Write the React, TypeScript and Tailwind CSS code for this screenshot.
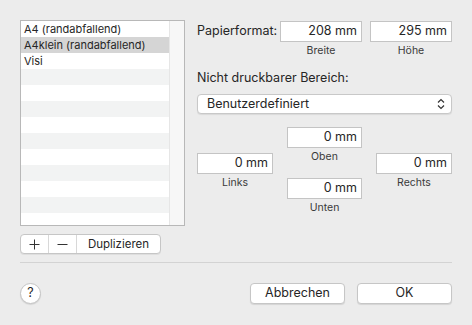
const font = { fontFamily: 'Inter, "Liberation Sans", sans-serif' };

const Field = ({ value, label, width = "w-[76px]" }: { value: string; label?: string; width?: string }) => (
  <div className={`flex flex-col items-center ${width}`}>
    <div className="w-full h-[21px] bg-white border border-[#c4c4c4] flex items-center justify-end pr-[4px] text-[12.5px] text-[#262626]">
      {value}
    </div>
    {label && <div className="mt-[2px] leading-[14px] text-[10.5px] text-[#3a3a3a]">{label}</div>}
  </div>
);

const rows = ["A4 (randabfallend)", "A4klein (randabfallend)", "Visi", "", "", "", "", "", "", "", "", "", ""];

export default function App() {
  return (
    <div style={font} className="w-[472px] h-[325px] bg-[#ececec] px-[20px] pt-[20px] flex flex-col text-[#262626]">
      <div className="flex">
        <div className="flex flex-col w-[165px]">
          <div className="h-[206px] border border-[#b8b8b8] bg-white flex overflow-hidden">
            <div className="flex-1 flex flex-col">
              {rows.map((r, i) => (
                <div
                  key={i}
                  className={`h-[16px] shrink-0 pl-[3px] leading-[16px] text-[11px] ${
                    i === 1 ? "bg-[#d5d5d5]" : i >= 3 && i % 2 === 1 ? "bg-[#f2f3f3]" : "bg-white"
                  }`}
                >
                  {r}
                </div>
              ))}
            </div>
            <div className="w-[15px] bg-[#f7f7f7] border-l border-[#e6e6e6]" />
          </div>
          <div className="mt-[8px] w-[141px] h-[20px] flex bg-white border border-[#c6c6c6] rounded-[4px] shadow-[0_1px_0_rgba(0,0,0,0.06)]">
            <div className="w-[28px] flex items-center justify-center border-r border-[#d8d8d8]">
              <svg width="11" height="11" viewBox="0 0 11 11">
                <path d="M5.5 0.5v10M0.5 5.5h10" stroke="#333" strokeWidth="1" />
              </svg>
            </div>
            <div className="w-[28px] flex items-center justify-center border-r border-[#d8d8d8]">
              <svg width="11" height="11" viewBox="0 0 11 11">
                <path d="M0.5 5.5h10" stroke="#333" strokeWidth="1" />
              </svg>
            </div>
            <div className="flex-1 flex items-center justify-center text-[11.5px] pt-[1px]">Duplizieren</div>
          </div>
        </div>

        <div className="ml-[12px] w-[255px] flex flex-col">
          <div className="flex items-start mt-[1px]">
            <div className="w-[83px] h-[21px] flex items-center text-[12.5px]">Papierformat:</div>
            <Field value="208 mm" label="Breite" width="w-[82px]" />
            <div className="ml-[8px]">
              <Field value="295 mm" label="Höhe" width="w-[82px]" />
            </div>
          </div>
          <div className="mt-[12px] text-[12.5px] leading-[16px]">Nicht druckbarer Bereich:</div>
          <div className="mt-[8px] h-[20px] bg-white border border-[#c8c8c8] rounded-[4px] shadow-[0_1px_1px_rgba(0,0,0,0.08)] flex items-center justify-between pl-[9px] pr-[6px]">
            <span className="text-[12.5px]">Benutzerdefiniert</span>
            <svg width="8" height="12" viewBox="0 0 8 12">
              <path d="M1 4.5L4 1.5L7 4.5M1 7.5L4 10.5L7 7.5" fill="none" stroke="#333" strokeWidth="1.2" />
            </svg>
          </div>
          <div className="mt-[13px] flex gap-[14px]">
            <div className="mt-[26px]">
              <Field value="0 mm" label="Links" />
            </div>
            <div className="flex flex-col">
              <Field value="0 mm" label="Oben" width="w-[75px]" />
              <div className="mt-[14px]">
                <Field value="0 mm" label="Unten" width="w-[75px]" />
              </div>
            </div>
            <div className="mt-[26px]">
              <Field value="0 mm" label="Rechts" />
            </div>
          </div>
        </div>
      </div>

      <div className="mt-[8px] h-px bg-[#d3d3d3] w-[432px]" />

      <div className="mt-[20px] flex items-center w-[432px]">
        <div className="w-[21px] h-[21px] rounded-full bg-white border border-[#c4c4c4] shadow-[0_1px_1px_rgba(0,0,0,0.1)] flex items-center justify-center text-[12.5px]">
          ?
        </div>
        <div className="ml-auto w-[95px] h-[21px] bg-white border border-[#c6c6c6] rounded-[4px] shadow-[0_1px_1px_rgba(0,0,0,0.1)] flex items-center justify-center text-[12.5px]">
          Abbrechen
        </div>
        <div className="ml-[12px] w-[95px] h-[21px] bg-white border border-[#c6c6c6] rounded-[4px] shadow-[0_1px_1px_rgba(0,0,0,0.1)] flex items-center justify-center text-[12.5px]">
          OK
        </div>
      </div>
    </div>
  );
}
